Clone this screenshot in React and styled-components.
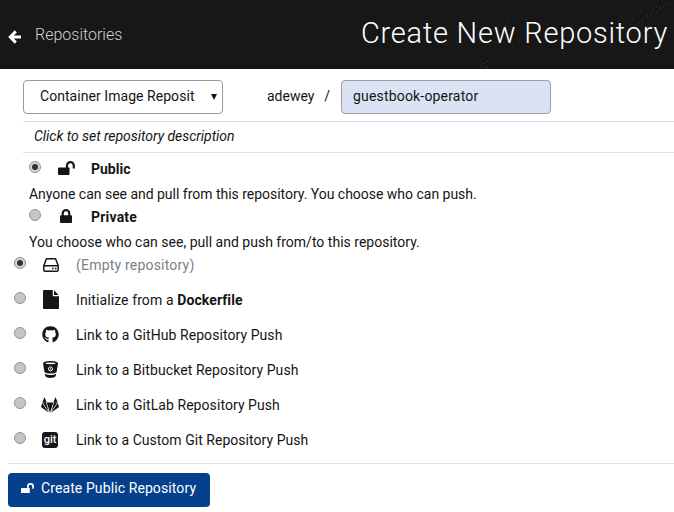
import React from 'react';
import styled, { createGlobalStyle } from 'styled-components';
import { FaGithub } from 'react-icons/fa';

const Global = createGlobalStyle`
  *, *::before, *::after { box-sizing: border-box; }
  body { margin: 0; background: #fff; color: #151515; font: 14px/20px Roboto, "Open Sans", sans-serif; }
  svg { display: block; }
`;
const Page = styled.main`width: 674px; height: 512px; overflow: hidden;`;
const Header = styled.header`
  height: 69px; background: #171717; display: flex; align-items: center; justify-content: space-between;
  padding: 0 6px 0 8px; color: #fff; position: relative;
`;
const Specks = styled.svg`position: absolute; right: 0; top: 0;`;
const Back = styled.a`
  display: flex; align-items: center; gap: 14px; color: #d2d2d2;
  svg { color: #fff; margin-top: 4px; }
`;
const Label = styled.span`
  white-space: pre; flex: none;
  font-size: ${p => p.$size || 14}px;
  font-weight: ${p => p.$weight || 400};
  letter-spacing: ${p => p.$ls || 0}px;
  font-style: ${p => (p.$italic ? 'italic' : 'normal')};
  color: ${p => p.$color || 'inherit'};
`;
const Title = styled.h1`margin: 0; font-size: 29px; line-height: 36px; font-weight: 300; letter-spacing: 0.77px; white-space: pre; padding-bottom: 3px;`;
const NameRow = styled.div`height: 52px; padding: 11px 0 7px 23px; display: flex; align-items: center;`;
const Select = styled.div`
  width: 200px; height: 34px; border: 1px solid #9a9b9f; border-radius: 4px; padding: 0 5px 2px 16px;
  display: flex; align-items: center; justify-content: space-between;
`;
const Caret = styled.span`border: 3px solid transparent; border-top: 6px solid #151515; border-bottom: 0; margin-top: 2px;`;
const Owner = styled.div`width: 118px; padding: 0 11px 2px 44px; display: flex; justify-content: space-between;`;
const NameInput = styled.div`
  width: 210px; height: 34px; border: 1px solid #9aa0a8; border-radius: 4px; background: #dae2f3;
  padding: 0 12px 2px 11px; display: flex; align-items: center;
`;
const Description = styled.div`
  height: 32px; margin-left: 23px; padding: 0 0 2px 11px; border: solid #d8dfed; border-width: 1px 0;
  display: flex; align-items: center;
`;
const Visibility = styled.section`padding: 5px 0 0 29px;`;
const VisRow = styled.div`height: 22px; display: flex; align-items: center;`;
const VisIcon = styled.span`width: 50px; display: flex; justify-content: center; margin-bottom: 3px;`;
const Help = styled.div`height: 26px; padding-top: 4px;`;
const Sources = styled.section`border-bottom: 1px solid #d8dfed; height: 217px; margin: -7px 0 9px 8px; padding-left: 6px;`;
const SourceRow = styled.label`height: 35px; display: flex; align-items: center;`;
const SourceIcon = styled.span`width: 50px; padding-left: ${p => (p.$shifted ? 2 : 0)}px; padding-right: 2px; display: flex; justify-content: center; flex: none;`;
const Radio = styled.span`
  width: 12px; height: 12px; border-radius: 50%; border: 1px solid #909297; flex: none; margin-bottom: 4px;
  background: ${p => (p.$on ? '#d3d4d7' : '#c5c6c9')}; display: flex; align-items: center; justify-content: center;
  &::after {
    content: ''; display: ${p => (p.$on ? 'block' : 'none')}; width: 6px; height: 6px; border-radius: 50%; background: #303134;
  }
`;
const Submit = styled.button`
  width: 202px; height: 34px; margin-left: 8px; border: 0; border-radius: 4px; background: #063f8c; color: #fff;
  display: flex; align-items: center; gap: 7px; padding: 0 13px 4px; font-family: inherit;
`;

const dots = [[335, 3], [332, 3], [329, 6], [325, 6], [322, 7], [326, 9], [319, 10], [316, 12], [322, 12], [313, 15], [317, 15], [313, 17], [308, 20], [305, 23], [303, 26], [299, 26], [92, 20], [89, 26], [174, 20], [179, 21], [171, 25], [176, 26], [192, 19], [185, 41], [68, 63], [153, 61], [149, 63], [153, 67]];

const ArrowIcon = () => (
  <svg width="13" height="14" viewBox="0 0 13 14" fill="none" stroke="currentColor" strokeWidth="3">
    <path d="M7.8 1.4 2.3 7l5.5 5.6M2.5 7H13" />
  </svg>
);
const UnlockIcon = ({ width }) => (
  <svg width={width} height={width * 14 / 17} viewBox="0 0 17 14">
    <rect y="6.5" width="11.5" height="7.5" rx=".8" fill="currentColor" />
    <path d="M9 7V4.500a3.400 3.400 0 0 1 6.800 0V7.500" fill="none" stroke="currentColor" strokeWidth="2.200" />
  </svg>
);
const LockIcon = () => (
  <svg width="12" height="14" viewBox="0 0 12 14">
    <rect y="6.3" width="12" height="7.7" rx=".9" fill="currentColor" />
    <path d="M2.7 7V4.4a3.3 3.3 0 0 1 6.6 0V7" fill="none" stroke="currentColor" strokeWidth="2.1" />
  </svg>
);
const DriveIcon = () => (
  <svg width="16" height="14" viewBox="0 0 16 14" fill="none" stroke="currentColor" strokeWidth="1.5" strokeLinejoin="round">
    <path d="M.8 7.8 3.1 1.5Q3.3.8 4 .8h8q.7 0 .9.7l2.3 6.3v4.1q0 1.3-1.3 1.3H2.1Q.8 13.2.8 11.9zM.8 7.8h14.4" />
    <path d="M9 10.5h1.6M11.9 10.5h1.6" />
  </svg>
);
const FileIcon = () => (
  <svg width="16" height="19" viewBox="0 0 16 19" fill="currentColor">
    <path d="M1 0h8.8v6.2H16V18a1 1 0 0 1-1 1H1a1 1 0 0 1-1-1V1a1 1 0 0 1 1-1zM11 .3 15.7 5H11z" />
  </svg>
);
const BucketIcon = () => (
  <svg width="15" height="17" viewBox="0 0 15 17">
    <path d="M0 2.6C0 .9 3.4 0 7.5 0S15 .9 15 2.6l-1.4 8.3c-1.5 1.2-3.7 1.7-6.1 1.7s-4.6-.5-6.1-1.7z" fill="currentColor" />
    <path d="M1.8 12.7c3.4 1.7 8 1.7 11.4 0l-.6 2.5C10.6 17.500 4.400 17.500 2.400 15.200z" fill="currentColor" />
    <ellipse cx="7.5" cy="2.3" rx="5" ry=".9" fill="#fff" />
    <circle cx="7.5" cy="7.9" r="2" fill="none" stroke="#fff" strokeWidth="1" />
    <circle cx="7.5" cy="7.9" r=".6" fill="#fff" />
  </svg>
);
const GitlabIcon = () => (
  <svg width="18" height="16" viewBox="0 0 18 16" fill="currentColor">
    <path d="M3.5 0 5.7 5.4H1.3zM14.500 0l2.200 5.400h-4.400zM5.700 5.500h6.600L9 15.800zM1.200 6 8 15.800 0 10zM16.800 6 10 15.800 18 10zM1.800 5.800h3.300l2.600 8.400zM16.200 5.800h-3.300l-2.600 8.400z" />
  </svg>
);
const GitBadge = styled.span`
  width: 16px; height: 16px; border-radius: 3px; background: #171717; color: #fff;
  display: flex; justify-content: center; font-size: 11px; line-height: 16px; font-weight: 500;
`;

export default function App() {
  return <><Global /><Page>
    <Header>
      <Specks width="340" height="69" fill="#3c3c3c">{dots.map(([x, y]) => <rect key={`${x}-${y}`} x={x} y={y} width="1" height="1" />)}</Specks>
      <Back><ArrowIcon /><Label $size={16} $weight={300}>Repositories</Label></Back>
      <Title>Create New Repository</Title>
    </Header>
    <NameRow>
      <Select><Label $ls={0.05}>Container Image Reposit</Label><Caret /></Select>
      <Owner><Label>adewey</Label><Label>/</Label></Owner>
      <NameInput><Label $ls={0.18}>guestbook-operator</Label></NameInput>
    </NameRow>
    <Description><Label $italic $ls={-0.04}>Click to set repository description</Label></Description>
    <Visibility>
      <VisRow><Radio $on /><VisIcon><UnlockIcon width={17} /></VisIcon><Label $weight={700}>Public</Label></VisRow>
      <Help><Label $ls={-0.02}>Anyone can see and pull from this repository. You choose who can push.</Label></Help>
      <VisRow><Radio /><VisIcon><LockIcon /></VisIcon><Label $weight={700} $ls={0.2}>Private</Label></VisRow>
      <Help><Label $ls={0.01}>You choose who can see, pull and push from/to this repository.</Label></Help>
    </Visibility>
    <Sources>
      <SourceRow><Radio $on /><SourceIcon $shifted><DriveIcon /></SourceIcon><Label $color="#7b7f87" $ls={0.2}>(Empty repository)</Label></SourceRow>
      <SourceRow><Radio /><SourceIcon $shifted><FileIcon /></SourceIcon><Label $ls={0.1}>Initialize from a <b>Dockerfile</b></Label></SourceRow>
      <SourceRow><Radio /><SourceIcon><FaGithub size={17} /></SourceIcon><Label $ls={0.07}>Link to a GitHub Repository Push</Label></SourceRow>
      <SourceRow><Radio /><SourceIcon><BucketIcon /></SourceIcon><Label $ls={0.08}>Link to a Bitbucket Repository Push</Label></SourceRow>
      <SourceRow><Radio /><SourceIcon><GitlabIcon /></SourceIcon><Label $ls={0.07}>Link to a GitLab Repository Push</Label></SourceRow>
      <SourceRow><Radio /><SourceIcon><GitBadge>git</GitBadge></SourceIcon><Label $ls={0.04}>Link to a Custom Git Repository Push</Label></SourceRow>
    </Sources>
    <Submit><UnlockIcon width={13} /><Label $ls={0.1}>Create Public Repository</Label></Submit>
  </Page></>;
}
